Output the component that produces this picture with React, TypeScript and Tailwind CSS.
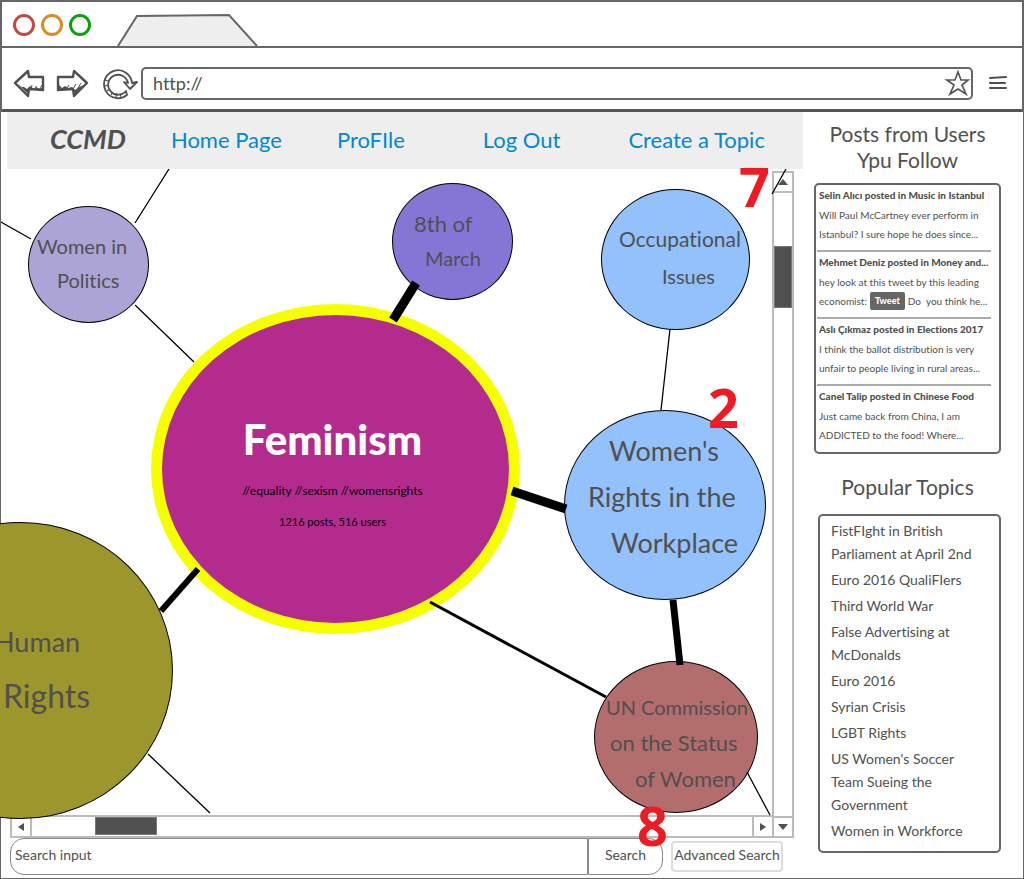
import React from "react";

type Line = { text: string; cls: string };
type TopicNode = { name: string; shape: string; lines: Line[] };

const nodes: TopicNode[] = [
  {
    name: "women-in-politics",
    shape: "left-[27px] top-[37px] w-[121px] h-[117px] bg-[#aca4d6] border border-black",
    lines: [
      { text: "Women in", cls: "left-[8px] top-[26px] text-[20px]" },
      { text: "Politics", cls: "left-[28px] top-[60px] text-[20px]" },
    ],
  },
  {
    name: "8th-of-march",
    shape: "left-[391px] top-[14px] w-[121px] h-[117px] bg-[#8576d6] border border-black",
    lines: [
      { text: "8th of", cls: "left-[21px] top-[27px] text-[22px]" },
      { text: "March", cls: "left-[32px] top-[61px] text-[20px]" },
    ],
  },
  {
    name: "occupational-issues",
    shape: "left-[600px] top-[20px] w-[149px] h-[141px] bg-[#92c1fc] border border-black",
    lines: [
      { text: "Occupational", cls: "left-[17px] top-[36px] text-[21px]" },
      { text: "Issues", cls: "left-[60px] top-[73px] text-[20px]" },
    ],
  },
  {
    name: "womens-rights-in-the-workplace",
    shape: "left-[563px] top-[241px] w-[202px] h-[190px] bg-[#92c1fc] border border-black",
    lines: [
      { text: "Women's", cls: "left-[44px] top-[27px] text-[27px]" },
      { text: "Rights in the", cls: "left-[23px] top-[73px] text-[27px]" },
      { text: "Workplace", cls: "left-[46px] top-[119px] text-[27px]" },
    ],
  },
  {
    name: "un-commission",
    shape: "left-[593px] top-[492px] w-[164px] h-[152px] bg-[#b46d6d] border border-black",
    lines: [
      { text: "UN Commission", cls: "left-[11px] top-[32px] text-[20px]" },
      { text: "on the Status", cls: "left-[15px] top-[68px] text-[22px]" },
      { text: "of Women", cls: "left-[40px] top-[104px] text-[22px]" },
    ],
  },
  {
    name: "human-rights",
    shape: "left-[-133px] top-[353px] w-[305px] h-[297px] bg-[#9d962d] border border-black",
    lines: [
      { text: "Human", cls: "left-[125px] top-[106px] text-[27px]" },
      { text: "Rights", cls: "left-[134px] top-[160px] text-[32px]" },
    ],
  },
];

const posts = [
  {
    title: "Selin Alıcı posted in Music in Istanbul",
    body: ["Will Paul McCartney ever perform in", "Istanbul? I sure hope he does since..."],
  },
  {
    title: "Mehmet Deniz posted in Money and...",
    body: ["hey look at this tweet by this leading", "economist:|Do  you think he..."],
  },
  {
    title: "Aslı Çıkmaz posted in Elections 2017",
    body: ["I think the ballot distribution is very", "unfair to people living in rural areas..."],
  },
  {
    title: "Canel Talip posted in Chinese Food",
    body: ["Just came back from China, I am", "ADDICTED to the food! Where..."],
  },
];

const topics = [
  "FistFIght in British Parliament at April 2nd",
  "Euro 2016 QualiFIers",
  "Third World War",
  "False Advertising at McDonalds",
  "Euro 2016",
  "Syrian Crisis",
  "LGBT Rights",
  "US Women's Soccer Team Sueing the Government",
  "Women in Workforce",
];

function BrowserChrome() {
  return (
    <header className="border-2 border-b-0 border-[#666]">
      <div className="flex h-[46px] items-end border-b-2 border-[#666]">
        <div className="flex gap-[6px] self-center pl-[11px] pt-[2px]">
          <span className="size-[22px] rounded-full border-[3px] border-[#be4b48]" />
          <span className="size-[22px] rounded-full border-[3px] border-[#dc8a22]" />
          <span className="size-[22px] rounded-full border-[3px] border-[#0aa00e]" />
        </div>
        <svg className="ml-[25px] h-[33px] w-[144px]" viewBox="0 0 144 33" aria-hidden="true">
          <path d="M2 33 21 3 113 2 141 33Z" fill="#eee" />
          <path d="M2 33 21 3 113 2 141 33" fill="none" stroke="#666" strokeWidth="2" />
        </svg>
      </div>
      <div className="flex h-[61px] items-center pl-[11px] pr-[15px] pt-[9px]">
        <button type="button" aria-label="Back">
          <svg className="h-8 w-[34px]" viewBox="0 0 34 32" fill="none" stroke="#505050" strokeWidth="2.4" strokeLinejoin="round">
            <path d="M2 16 15 4 16 10 30 10V23L16 22 15 29Z" />
            <path d="M5 17 15 27V23L30 22V20L27 22 23 20 21 22 17 19 14 22 11 20 9 20Z" fill="#505050" stroke="none" />
            <path d="M27 22l2-4M18 22l1-4M23 22v-3" strokeWidth="1" />
          </svg>
        </button>
        <button type="button" aria-label="Forward" className="ml-2">
          <svg className="h-8 w-[34px]" viewBox="0 0 34 32" fill="none" stroke="#505050" strokeWidth="2.4" strokeLinejoin="round">
            <path d="M32 16 19 4 18 10 3 10V23L18 22 19 29Z" />
            <path d="M4 18 7 21 10 19 13 21 17 20 20 23 24 20 29 18 19 28 18 23 4 22Z" fill="#505050" stroke="none" />
            <path d="M18 22l3-5M23 21l3-5M12 21l2-3" strokeWidth="1" />
          </svg>
        </button>
        <button type="button" aria-label="Reload" className="ml-[14px]">
          <svg className="h-[34px] w-9" viewBox="0 0 36 34" fill="none" stroke="#505050" strokeWidth="1.8" strokeLinejoin="round">
            <path d="M29 17A14 14 0 1 0 24 29L23 25A10 10 0 1 1 25 17L21 16 27 23 34 16Z" />
            <path d="M2 20l3-1M4 25l3-2M8 29l2-3M13 31l1-4M18 31l-1-4M2 14l3 1" strokeWidth="1.2" />
          </svg>
        </button>
        <div className="ml-[2px] flex h-[33px] flex-1 items-center rounded-[5px] border-2 border-[#666] pl-[10px]">
          <input
            aria-label="Address"
            defaultValue="http://"
            className="min-w-0 flex-1 bg-transparent text-[18px] text-[#505050] outline-none"
          />
          <svg className="h-7 w-7" viewBox="0 0 28 28" fill="none" stroke="#555" strokeWidth="1.7" aria-hidden="true">
            <path d="M15 3 18 11 25 11 19 16 23 25 15 20 7 25 11 16 4 11 12 11Z" />
          </svg>
        </div>
        <button type="button" aria-label="Menu" className="ml-[16px]">
          <svg className="h-4 w-[18px]" viewBox="0 0 18 16" stroke="#505050" strokeWidth="2" strokeLinecap="round">
            <path d="M1 3 17 2M1 8 16 8M1 13 17 13" />
          </svg>
        </button>
      </div>
      <div className="h-[3px] bg-[#555]" />
    </header>
  );
}

function TopicMap() {
  return (
    <main className="relative h-[646px] text-[#505050]">
      {nodes.map((n) => (
        <div key={n.name} className={`absolute rounded-[50%] ${n.shape}`}>
          {n.lines.map((l) => (
            <span key={l.text} className={`absolute whitespace-nowrap leading-[26px] ${l.cls}`}>
              {l.text}
            </span>
          ))}
        </div>
      ))}
      <div className="absolute left-[150px] top-[135px] flex h-[330px] w-[369px] flex-col items-center rounded-[50%] border-[11px] border-[#f6ff00] bg-[#b42b8e] pr-[6px] pt-[98px]">
        <h1 className="text-[42px] font-black leading-[52px] text-white">Feminism</h1>
        <p className="mt-[16px] text-[12px] leading-5 text-black">//equality //sexism //womensrights</p>
        <p className="mt-[11px] text-[11px] leading-5 text-black">1216 posts, 516 users</p>
      </div>
      <svg
        className="pointer-events-none absolute left-0 top-0 h-[660px] w-[800px]"
        viewBox="1 169 800 660"
        stroke="#000"
        aria-hidden="true"
      >
        <path d="M169 169 135 223M1 222 31 239M135 305 194 362M670 329 661 410M148 754 210 813M747 772 770 815M786 169 772 194" strokeWidth="1.3" />
        <path d="M416 283 393 320" strokeWidth="9" />
        <path d="M512 491 566 509" strokeWidth="9" />
        <path d="M673 600 680 665" strokeWidth="7" />
        <path d="M198 569 161 611" strokeWidth="6" />
        <path d="M430 602 606 697" strokeWidth="3" />
      </svg>
      <span className="absolute left-[738px] top-[-5px] font-['Open_Sans'] text-[54px] font-bold leading-[44px] text-[#ed1c24]">7</span>
      <span className="absolute left-[707px] top-[216px] font-['Open_Sans'] text-[54px] font-bold leading-[44px] text-[#ed1c24]">2</span>
      <span className="absolute left-[636px] top-[634px] z-10 font-['Open_Sans'] text-[54px] font-bold leading-[44px] text-[#ed1c24]">8</span>
    </main>
  );
}

const arrow = "fill-[#505050]";

function VerticalScroll() {
  return (
    <div className="mt-[2px] flex flex-col border-2 border-[#bbb]">
      <button type="button" aria-label="Scroll up" className="flex h-5 items-center justify-center border-b-2 border-[#bbb]">
        <svg className="h-2 w-[10px]" viewBox="0 0 10 8"><path className={arrow} d="M5 1 10 7H0Z" /></svg>
      </button>
      <div className="mt-[53px] h-[62px] w-[18px] border border-[#777] bg-[#505050]" />
      <button type="button" aria-label="Scroll down" className="mt-auto flex h-5 items-center justify-center border-t-2 border-[#bbb]">
        <svg className="h-2 w-[10px]" viewBox="0 0 10 8"><path className={arrow} d="M5 7 10 1H0Z" /></svg>
      </button>
    </div>
  );
}

function HorizontalScroll() {
  return (
    <div className="ml-[9px] flex h-[23px] border-2 border-r-0 border-[#bbb]">
      <button type="button" aria-label="Scroll left" className="flex w-5 items-center justify-center border-r-2 border-[#bbb]">
        <svg className="h-2 w-2" viewBox="0 0 8 8"><path className={arrow} d="M1 4 7 0V8Z" /></svg>
      </button>
      <div className="ml-[63px] h-[18px] w-[62px] border border-[#777] bg-[#505050]" />
      <button type="button" aria-label="Scroll right" className="ml-auto flex w-5 items-center justify-center border-l-2 border-[#bbb]">
        <svg className="h-2 w-2" viewBox="0 0 8 8"><path className={arrow} d="M7 4 1 0V8Z" /></svg>
      </button>
    </div>
  );
}

function Sidebar() {
  return (
    <aside className="flex w-[220px] shrink-0 flex-col pl-[11px] pr-[22px] text-[#505050]">
      <h2 className="pt-[9px] text-center text-[21px] leading-[26px]">
        Posts from Users
        <br />
        Ypu Follow
      </h2>
      <section className="mt-[10px] h-[271px] rounded-[5px] border-2 border-[#666] pl-px pr-[8px]">
        {posts.map((p, i) => (
          <article key={p.title} className={i ? "border-t-2 border-[#aaa] pb-[6px]" : "pb-[6px]"}>
            <h3 className="mb-px whitespace-nowrap pl-[2px] text-[10px] font-black leading-5">{p.title}</h3>
            {p.body.map((b) => {
              const [before, after] = b.split("|");
              return (
                <p key={b} className="flex h-[19px] items-center whitespace-pre pb-px pl-[2px] text-[10px]">
                  {before}
                  {after && (
                    <>
                      <button type="button" className="mx-[3px] h-[18px] rounded-[2px] bg-[#666] px-[5px] text-[9px] font-black text-white">
                        Tweet
                      </button>
                      {after}
                    </>
                  )}
                </p>
              );
            })}
          </article>
        ))}
      </section>
      <h2 className="mt-[20px] text-center text-[21px] leading-[26px]">Popular Topics</h2>
      <section className="ml-[4px] mt-[14px] rounded-[5px] border-2 border-[#666] pb-[9px] pl-[11px] pr-[20px] pt-[3px]">
        <ul className="flex flex-col gap-[3px] text-[14px] leading-[23px]">
          {topics.map((t) => (
            <li key={t}>{t}</li>
          ))}
        </ul>
      </section>
    </aside>
  );
}

export default function App() {
  return (
    <div className="flex min-h-screen flex-col overflow-hidden bg-white font-['Lato',sans-serif] [font-variant-ligatures:none]">
      <BrowserChrome />
      <div className="flex flex-1 border border-t-0 border-[#666]">
        <div className="flex min-w-0 flex-1 flex-col">
          <nav className="ml-[6px] flex h-[57px] items-center bg-[#eee] pb-[3px] text-[22px] text-[#0288d1]">
            <strong className="ml-[43px] text-[27px] italic text-[#505050]">CCMD</strong>
            <a href="#home" className="ml-[45px]">Home Page</a>
            <a href="#profile" className="ml-[55px]">ProFIle</a>
            <a href="#logout" className="ml-[78px]">Log Out</a>
            <a href="#create" className="ml-[68px]">Create a Topic</a>
          </nav>
          <div className="flex pr-[9px]">
            <div className="relative z-10 flex min-w-0 flex-1 flex-col">
              <TopicMap />
              <HorizontalScroll />
            </div>
            <VerticalScroll />
          </div>
          <form className="ml-[9px] flex items-start text-[14px] text-[#505050]" onSubmit={(e) => e.preventDefault()}>
            <input
              aria-label="Search"
              defaultValue="Search input"
              className="h-[37px] w-[578px] rounded-l-[14px] border border-[#888] pb-[4px] pl-[4px] outline-none"
            />
            <button type="submit" className="h-[37px] w-[75px] rounded-r-[14px] border border-[#888] pb-[4px]">
              Search
            </button>
            <button type="button" className="ml-[8px] mt-[3px] h-[31px] w-[112px] whitespace-nowrap rounded-[4px] border-2 border-[#ddd] pb-[4px]">
              Advanced Search
            </button>
          </form>
        </div>
        <Sidebar />
      </div>
    </div>
  );
}
